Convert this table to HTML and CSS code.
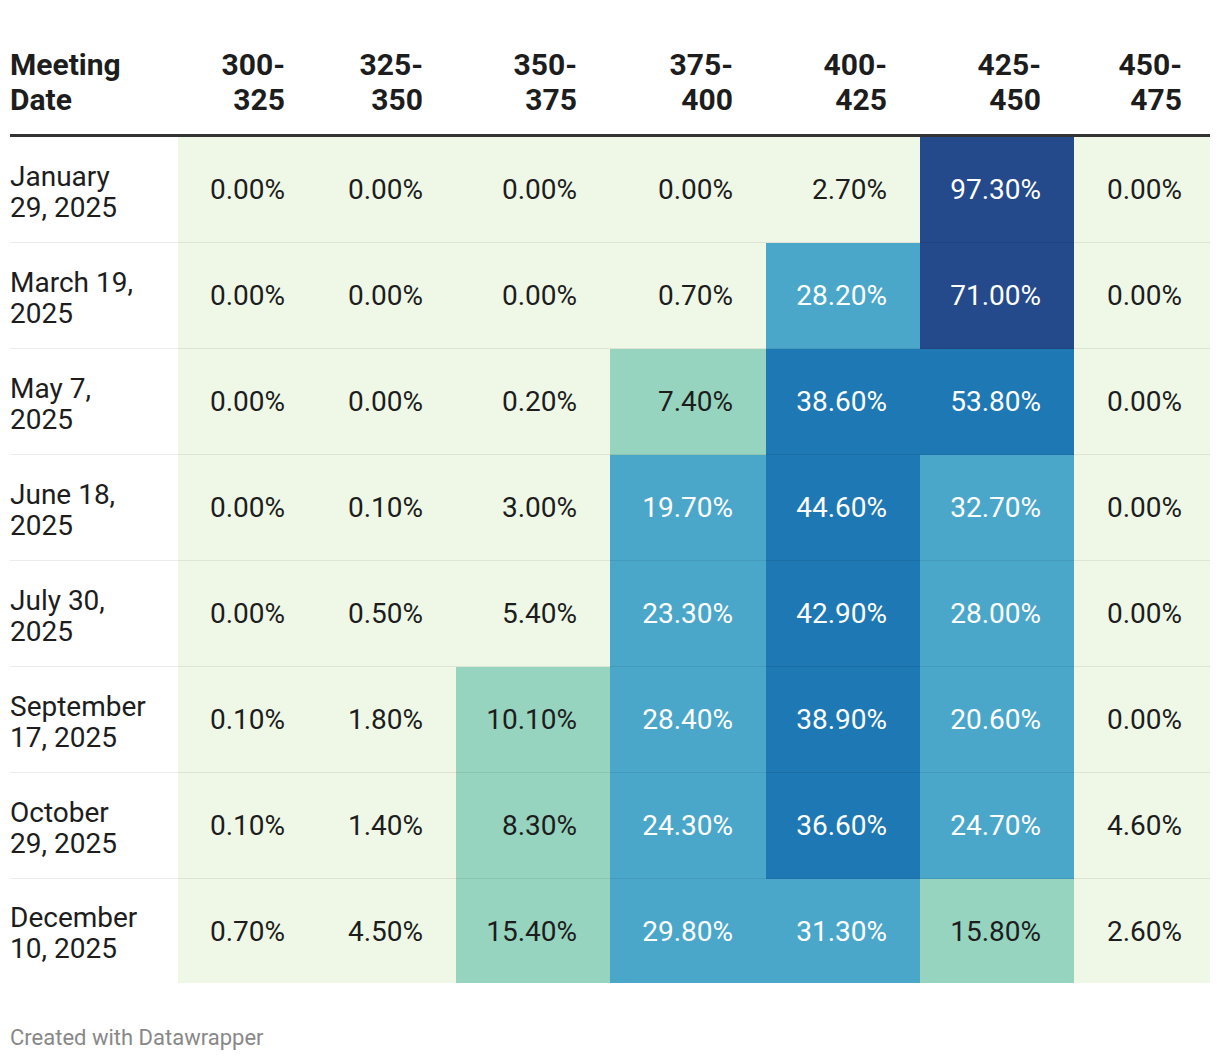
FILE: index.html
```html
<!DOCTYPE html>
<html lang="en">
<head>
<meta charset="utf-8">
<title>Meeting probabilities</title>
<link rel="stylesheet" href="styles.css">
</head>
<body>
<div class="chart">
  <table class="heat">
    <colgroup>
      <col class="c-date"><col class="c-140"><col class="c-138"><col class="c-154"><col class="c-156"><col class="c-154"><col class="c-154"><col class="c-136">
    </colgroup>
    <thead>
      <tr>
        <th class="date">Meeting<br>Date</th>
        <th>300-<br>325</th>
        <th>325-<br>350</th>
        <th>350-<br>375</th>
        <th>375-<br>400</th>
        <th>400-<br>425</th>
        <th>425-<br>450</th>
        <th class="last">450-<br>475</th>
      </tr>
    </thead>
    <tbody>
      <tr>
        <td class="date">January<br>29, 2025</td>
        <td class="l">0.00%</td><td class="l">0.00%</td><td class="l">0.00%</td><td class="l">0.00%</td><td class="l">2.70%</td><td class="n">97.30%</td><td class="l last">0.00%</td>
      </tr>
      <tr>
        <td class="date">March 19,<br>2025</td>
        <td class="l">0.00%</td><td class="l">0.00%</td><td class="l">0.00%</td><td class="l">0.70%</td><td class="m">28.20%</td><td class="n">71.00%</td><td class="l last">0.00%</td>
      </tr>
      <tr>
        <td class="date">May 7,<br>2025</td>
        <td class="l">0.00%</td><td class="l">0.00%</td><td class="l">0.20%</td><td class="g">7.40%</td><td class="b">38.60%</td><td class="b">53.80%</td><td class="l last">0.00%</td>
      </tr>
      <tr>
        <td class="date">June 18,<br>2025</td>
        <td class="l">0.00%</td><td class="l">0.10%</td><td class="l">3.00%</td><td class="m">19.70%</td><td class="b">44.60%</td><td class="m">32.70%</td><td class="l last">0.00%</td>
      </tr>
      <tr>
        <td class="date">July 30,<br>2025</td>
        <td class="l">0.00%</td><td class="l">0.50%</td><td class="l">5.40%</td><td class="m">23.30%</td><td class="b">42.90%</td><td class="m">28.00%</td><td class="l last">0.00%</td>
      </tr>
      <tr>
        <td class="date">September<br>17, 2025</td>
        <td class="l">0.10%</td><td class="l">1.80%</td><td class="g">10.10%</td><td class="m">28.40%</td><td class="b">38.90%</td><td class="m">20.60%</td><td class="l last">0.00%</td>
      </tr>
      <tr>
        <td class="date">October<br>29, 2025</td>
        <td class="l">0.10%</td><td class="l">1.40%</td><td class="g">8.30%</td><td class="m">24.30%</td><td class="b">36.60%</td><td class="m">24.70%</td><td class="l last">4.60%</td>
      </tr>
      <tr class="end">
        <td class="date">December<br>10, 2025</td>
        <td class="l">0.70%</td><td class="l">4.50%</td><td class="g">15.40%</td><td class="m">29.80%</td><td class="m">31.30%</td><td class="g">15.80%</td><td class="l last">2.60%</td>
      </tr>
    </tbody>
  </table>
  <p class="credit">Created with Datawrapper</p>
</div>
</body>
</html>
```
FILE: styles.css
```css
html, body {
  margin: 0;
  padding: 0;
  background: #ffffff;
}

body {
  font-family: Roboto, "Liberation Sans", sans-serif;
  color: #1d1d1d;
}

.chart {
  padding: 40px 10px 0 10px;
  width: 1200px;
}

.heat {
  width: 1200px;
  table-layout: fixed;
  border-collapse: separate;
  border-spacing: 0;
  font-size: 28px;
}

.c-date { width: 168px; }
.c-140 { width: 140px; }
.c-138 { width: 138px; }
.c-154 { width: 154px; }
.c-156 { width: 156px; }
.c-136 { width: 136px; }

.heat th {
  font-size: 30px;
  font-weight: 700;
  line-height: 35px;
  text-align: right;
  vertical-align: bottom;
  padding: 7px 33px 17px 0;
  border-bottom: 3px solid #333333;
}

.heat th.date,
.heat td.date {
  text-align: left;
  padding-left: 0;
  padding-right: 0;
}

.heat th.last,
.heat td.last {
  padding-right: 28px;
}

.heat td {
  height: 104px;
  padding: 1px 33px 0 0;
  text-align: right;
  vertical-align: middle;
  line-height: 32px;
  border-bottom: 1px solid rgba(0, 0, 0, 0.075);
  white-space: nowrap;
}

.heat td.date {
  height: 101px;
  line-height: 31px;
  padding-top: 4px;
}

.heat tr.end td {
  border-bottom: none;
  height: 103px;
}

.heat tr.end td.date {
  height: 100px;
}

.heat td.l { background: #eff8e7; color: #1d1d1d; }
.heat td.g { background: #97d4bf; color: #1d1d1d; }
.heat td.m { background: #4aa7ca; color: #ffffff; }
.heat td.b { background: #1e78b4; color: #ffffff; }
.heat td.n { background: #244a8c; color: #ffffff; }

.credit {
  margin: 43px 0 0 0;
  font-size: 22px;
  line-height: 24px;
  color: #888888;
}
```
